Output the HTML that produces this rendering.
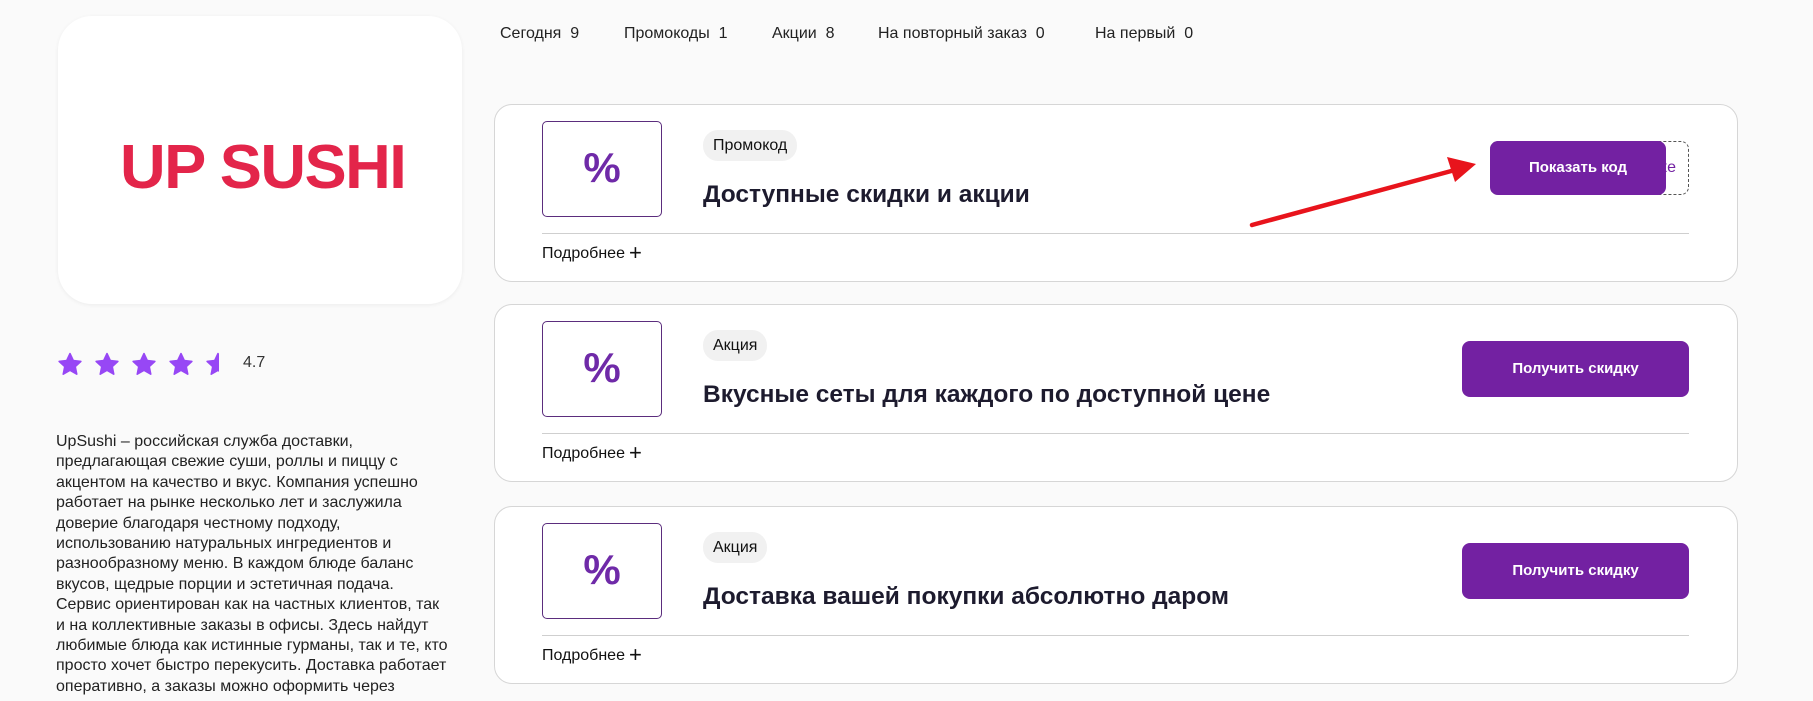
<!DOCTYPE html>
<html><head><meta charset="utf-8"><style>
*{margin:0;padding:0;box-sizing:border-box}
body{width:1813px;height:701px;overflow:hidden;background:#fafafa;font-family:"Liberation Sans",sans-serif;position:relative;color:#222}
.abs{position:absolute}
.logo{left:58px;top:16px;width:404px;height:288px;background:#fff;border-radius:34px;box-shadow:0 1px 4px rgba(0,0,0,0.06)}
.logo span{position:absolute;left:62px;top:116px;font-size:62px;font-weight:bold;color:#e3254a;letter-spacing:-1.5px;transform:scaleX(1.02);transform-origin:left;white-space:nowrap}
.tab{top:25px;font-size:16px;color:#222;white-space:nowrap}
.card{left:494px;width:1244px;height:178px;background:#fff;border:1px solid #d6d6d6;border-radius:18px}
.pbox{left:47px;top:16px;width:120px;height:96px;border:1px solid #5b2d7d;border-radius:5px;text-align:center;line-height:92px;font-size:42px;font-weight:bold;color:#6f2aa8}
.tag{left:208px;top:25px;height:31px;padding:0 10px;background:#f1f1f1;border-radius:15px;line-height:31px;font-size:16px;color:#111}
.title{left:208px;top:76px;font-size:24.5px;font-weight:bold;color:#1d1b2e;white-space:nowrap}
.div{left:47px;right:48px;top:128px;height:1px;background:#cfcfcf}
.more{left:47px;top:133px;font-size:16px;color:#111}
.more b{font-weight:normal;font-size:22px;position:relative;top:2px;margin-left:4px}
.btn{right:48px;top:36px;width:227px;height:56px;background:#7321a2;border-radius:8px;color:#fff;font-size:15px;font-weight:bold;text-align:center;line-height:56px}
.desc{left:56px;top:432px;width:392px;font-size:16px;line-height:20.4px;color:#222}
</style></head><body>
<div class="abs logo"><span>UP SUSHI</span></div>
<div class="abs tab" style="left:500px">Сегодня&nbsp; 9</div>
<div class="abs tab" style="left:624px">Промокоды&nbsp; 1</div>
<div class="abs tab" style="left:772px">Акции&nbsp; 8</div>
<div class="abs tab" style="left:878px">На повторный заказ&nbsp; 0</div>
<div class="abs tab" style="left:1095px">На первый&nbsp; 0</div>

<svg class="abs" style="left:56px;top:351px" width="180" height="28" viewBox="0 0 180 28">
<defs><path id="s" d="M12 1.5l3.3 7 7.6.9-5.6 5.2 1.5 7.6L12 18.4l-6.8 3.8 1.5-7.6L1.1 9.4l7.6-.9z" fill="#9747f5" stroke="#9747f5" stroke-width="1.5" stroke-linejoin="round"/>
<clipPath id="h"><rect x="148" y="0" width="15" height="28"/></clipPath></defs>
<use href="#s" x="2" y="1"/><use href="#s" x="39" y="1"/><use href="#s" x="76" y="1"/><use href="#s" x="113" y="1"/>
<g clip-path="url(#h)"><use href="#s" x="150" y="1"/></g>
</svg>
<div class="abs" style="left:243px;top:354px;font-size:16px;color:#333">4.7</div>

<div class="abs desc">UpSushi – российская служба доставки, предлагающая свежие суши, роллы и пиццу с акцентом на качество и вкус. Компания успешно работает на рынке несколько лет и заслужила доверие благодаря честному подходу, использованию натуральных ингредиентов и разнообразному меню. В каждом блюде баланс вкусов, щедрые порции и эстетичная подача. Сервис ориентирован как на частных клиентов, так и на коллективные заказы в офисы. Здесь найдут любимые блюда как истинные гурманы, так и те, кто просто хочет быстро перекусить. Доставка работает оперативно, а заказы можно оформить через</div>

<div class="abs card" style="top:104px">
<div class="abs pbox">%</div>
<div class="abs tag">Промокод</div>
<div class="abs title">Доступные скидки и акции</div>
<div class="abs" style="right:48px;top:36px;width:199px;height:54px;border:1px dashed #555;border-radius:8px;color:#7321a2;font-size:16px;line-height:52px;text-align:right;padding-right:12px">ке</div>
<div class="abs" style="left:995px;top:36px;width:176px;height:54px;background:#7321a2;border-radius:8px;color:#fff;font-size:15px;font-weight:bold;text-align:center;line-height:54px">Показать код</div>
<div class="abs div"></div>
<div class="abs more">Подробнее<b>+</b></div>
</div>

<div class="abs card" style="top:304px">
<div class="abs pbox">%</div>
<div class="abs tag">Акция</div>
<div class="abs title">Вкусные сеты для каждого по доступной цене</div>
<div class="abs btn">Получить скидку</div>
<div class="abs div"></div>
<div class="abs more">Подробнее<b>+</b></div>
</div>

<div class="abs card" style="top:506px">
<div class="abs pbox">%</div>
<div class="abs tag">Акция</div>
<div class="abs title">Доставка вашей покупки абсолютно даром</div>
<div class="abs btn">Получить скидку</div>
<div class="abs div"></div>
<div class="abs more">Подробнее<b>+</b></div>
</div>

<svg class="abs" style="left:0;top:0" width="1813" height="701">
<line x1="1252" y1="225" x2="1455" y2="170" stroke="#e8141c" stroke-width="4.5" stroke-linecap="round"/>
<polygon points="1476,164 1447,157 1455,182" fill="#e8141c"/>
</svg>
</body></html>
